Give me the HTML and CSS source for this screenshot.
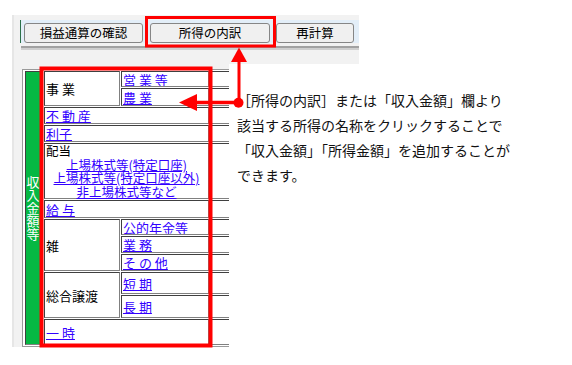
FILE: index.html
```html
<!DOCTYPE html>
<html lang="ja">
<head>
<meta charset="utf-8">
<title>所得の内訳</title>
<link rel="stylesheet" href="styles.css">
</head>
<body>
<div class="screen">
  <div class="panel-top">
    <div class="toolbar">
      <button class="btn btn-check">損益通算の確認</button>
      <button class="btn btn-detail">所得の内訳</button>
      <button class="btn btn-recalc">再計算</button>
    </div>
    <div class="separator"></div>
  </div>
  <div class="lower">
    <div class="panel-left">
      <div class="income">
        <div class="cell green"><span class="vtext">収入金額等</span></div>
        <div class="cell label span-r2">事 業</div>
        <div class="cell"><a href="#">営 業 等</a></div>
        <div class="cell"></div>
        <div class="cell"><a href="#">農 業</a></div>
        <div class="cell"></div>
        <div class="cell span-c2"><a href="#">不 動 産</a></div>
        <div class="cell"></div>
        <div class="cell span-c2"><a href="#">利子</a></div>
        <div class="cell"></div>
        <div class="cell span-c2 stack">
          <div class="stack-label">配当</div>
          <div class="stack-links">
            <a href="#">上場株式等(特定口座)</a><br>
            <a href="#">上場株式等(特定口座以外)</a><br>
            <a href="#">非上場株式等など</a>
          </div>
        </div>
        <div class="cell"></div>
        <div class="cell span-c2"><a href="#">給 与</a></div>
        <div class="cell"></div>
        <div class="cell label span-r3">雑</div>
        <div class="cell"><a href="#">公的年金等</a></div>
        <div class="cell"></div>
        <div class="cell"><a href="#">業 務</a></div>
        <div class="cell"></div>
        <div class="cell"><a href="#">そ の 他</a></div>
        <div class="cell"></div>
        <div class="cell label span-r2">総合譲渡</div>
        <div class="cell"><a href="#">短 期</a></div>
        <div class="cell"></div>
        <div class="cell"><a href="#">長 期</a></div>
        <div class="cell"></div>
        <div class="cell span-c2"><a href="#">一 時</a></div>
        <div class="cell"></div>
      </div>
    </div>
    <p class="note">［所得の内訳］または「収入金額」欄より<br>該当する所得の名称をクリックすることで<br>「収入金額」「所得金額」を追加することが<br>できます。</p>
  </div>
  <svg class="overlay" width="572" height="365" viewBox="0 0 572 365">
    <g fill="none" stroke="#ff0000">
      <rect x="146.5" y="17.5" width="128" height="28.5" stroke-width="3"/>
      <rect x="41.5" y="68.5" width="169" height="277" stroke-width="4"/>
      <line x1="239" y1="60" x2="239" y2="103" stroke-width="3"/>
      <line x1="195" y1="102.5" x2="238" y2="102.5" stroke-width="3.5"/>
    </g>
    <g fill="#ff0000">
      <polygon points="239,47.5 231,62 247,62"/>
      <polygon points="179,102.5 197,94 197,111"/>
      <circle cx="238.5" cy="102.8" r="5"/>
    </g>
  </svg>
</div>
</body>
</html>
```
FILE: styles.css
```css
* { box-sizing: border-box; }

body {
  margin: 0;
  background: #ffffff;
  font-family: "Noto Sans CJK JP", "Noto Sans", sans-serif;
  color: #000;
}

.screen {
  position: relative;
  width: 572px;
  height: 365px;
  padding: 15px 0 0 12px;
  overflow: hidden;
}

.panel-top {
  width: 347px;
  height: 49px;
  background: #f2f2f2;
  border-left: 2px solid #e6e6e6;
  padding: 5px 0 0 6px;
}

.toolbar {
  display: flex;
  align-items: flex-start;
  height: 23px;
  padding: 3px 0 0 3px;
  background: #e3eef8;
  border-left: 1px solid #2b7048;
}

.btn {
  height: 20px;
  padding: 0;
  border: 1px solid #868686;
  border-radius: 3px;
  background: #f0f0f0;
  font-family: "Noto Sans CJK JP", sans-serif;
  font-size: 12.5px;
  line-height: 18px;
  color: #000;
}

.btn-check { width: 119px; }
.btn-detail { width: 120px; margin-left: 7px; }
.btn-recalc { width: 78px; margin-left: 6px; }

.separator {
  margin: 3px 0 0 1px;
  height: 4px;
  border-top: 2px solid #a2a2a2;
  border-bottom: 2px solid #cfcfcf;
}

.lower {
  display: flex;
  align-items: flex-start;
}

.panel-left {
  flex: none;
  width: 217px;
  height: 283px;
  background: #f2f2f2;
  border-left: 2px solid #e6e6e6;
  padding: 5px 0 0 8px;
  overflow: hidden;
}

.income {
  display: grid;
  width: max-content;
  grid-template-columns: 18px 76px 88px 60px;
  grid-template-rows: 16px 18px 17px 17px 56px 18px 16px 17px 17px 22px 23px 26px;
  gap: 1px;
  padding: 1px 1px 1px 2px;
  border: 1px solid #9a9a9a;
  background: #ffffff;
}

.cell {
  display: flex;
  align-items: center;
  padding: 0 1px;
  border: 1px solid;
  border-color: #404040 #808080 #808080 #404040;
  background: #ffffff;
  font-size: 13px;
  line-height: 15px;
  white-space: nowrap;
  overflow: hidden;
}

.cell a {
  color: #3300ff;
  text-decoration: underline;
}

.green {
  grid-row: span 12;
  justify-content: center;
  padding: 0 2px 0 0;
  background: #05b843;
  color: #ffffff;
}

.vtext {
  writing-mode: vertical-rl;
  text-orientation: upright;
  font-size: 13px;
  line-height: 13px;
}

.span-r2 { grid-row: span 2; }
.span-r3 { grid-row: span 3; }
.span-c2 { grid-column: span 2; }

.stack {
  display: block;
  overflow: visible;
  font-size: 12.5px;
  line-height: 13.5px;
}

.stack-label {
  line-height: 13.5px;
}

.stack-links {
  text-align: center;
  line-height: 13.5px;
}

.note {
  margin: 0;
  padding: 24px 0 0 8px;
  font-size: 14px;
  line-height: 25px;
  color: #111111;
  white-space: nowrap;
}

.overlay {
  position: absolute;
  top: 0;
  left: 0;
  pointer-events: none;
}
```
